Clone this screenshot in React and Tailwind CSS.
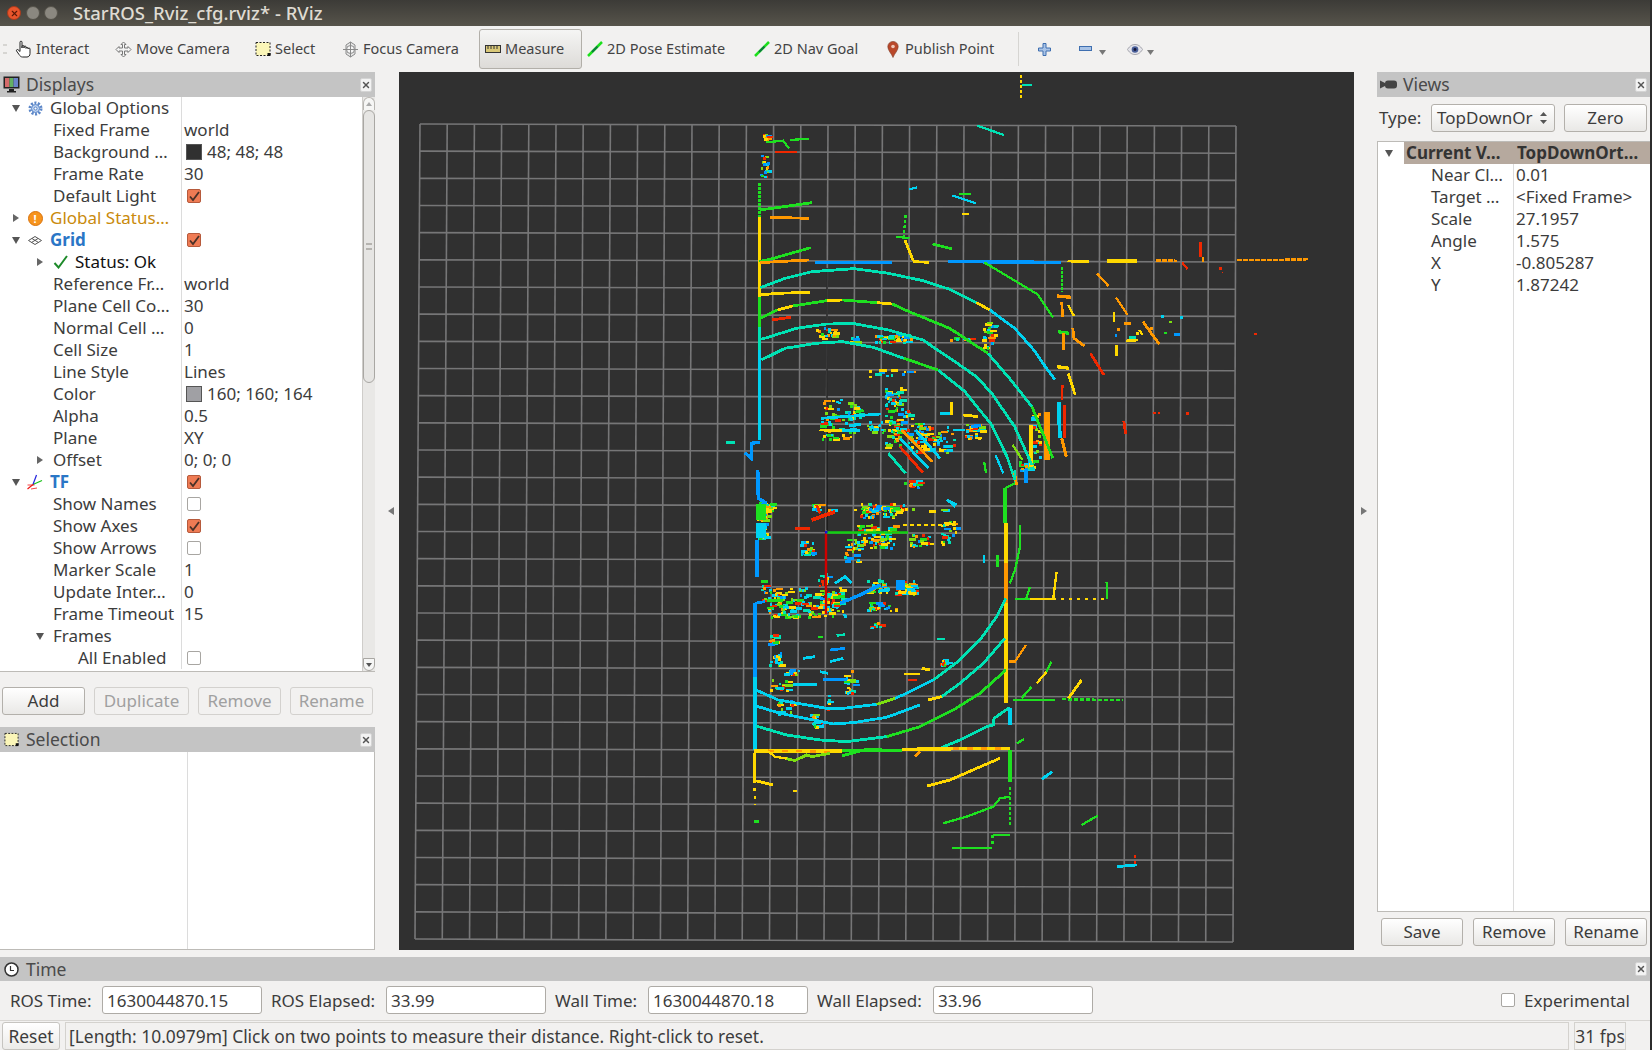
import { X } from "lucide-react";

const B = "#0098ff", C = "#00d2f0", T = "#00e2b4", G = "#1ee020", L = "#7ce010", Y = "#ffd800", O = "#ff9800", R = "#f02800";
const RAINBOW = [B, C, T, G, L, Y, O, R, Y, C];

// scan segments, in the coordinates of the upper crop (x * 0.3827 + 720, y / 3 + 110)
const upperLines = [
  [G, 2, "103,220 103,320", "3 1"], [Y, 2.5, "103,320 103,560"], [G, 2.5, "103,560 103,650"], [T, 2.5, "103,650 103,720"], [C, 3, "103,720 103,990"],
  [B, 2.5, "105,997 82,1000 82,1045 65,1028"], [T, 2, "15,997 38,997"],
  [G, 1.5, "120,97 165,92 180,115"], [G, 1.5, "183,90 232,86"], [R, 1.5, "145,127 200,125"],
  [G, 2, "105,300 240,278"], [O, 2, "130,322 232,325"], [G, 2, "103,455 140,445 237,413"], [O, 2, "105,458 150,455 232,450"],
  [Y, 2, "105,555 150,550 235,547"], [R, 2, "135,630 185,622"], [T, 1.5, "672,47 742,75"],
  [B, 2.5, "247,458 450,458"], [B, 2.5, "595,455 890,457"], [G, 1.5, "690,457 760,505 830,553 870,622"],
  [Y, 2, "908,453 965,455"], [Y, 3, "1010,453 1090,453"], [O, 2, "1140,451 1195,453", "5 1"], [O, 1.5, "1350,451 1540,448", "5 1"],
  [R, 2, "1255,395 1255,440"], [O, 2, "1262,440 1262,455"], [R, 1.5, "1208,458 1222,478"], [R, 2, "1308,470 1310,490", "3 3"],
  [O, 1.5, "985,490 1015,528"], [O, 1.5, "1035,563 1065,615"], [Y, 1.5, "1030,605 1030,635"], [O, 2, "1105,635 1148,703"], [Y, 1.5, "1095,660 1105,675"],
  [Y, 2, "1060,693 1092,690"], [Y, 2, "1037,705 1037,738"], [R, 2, "968,730 1003,795"],
  [G, 1.5, "893,470 893,545", "3 1"], [O, 2.5, "880,558 918,562"], [O, 2, "893,575 895,620"], [Y, 1.5, "910,585 925,618"], [G, 2.5, "883,665 912,670"],
  [O, 2, "898,670 898,720"], [O, 2, "922,655 925,685 952,708"], [Y, 2.5, "880,770 912,775"], [Y, 2, "910,790 928,855"], [R, 1.5, "895,825 893,870"],
  [C, 3, "885,875 888,985"], [R, 2, "900,885 900,985"], [O, 2.5, "893,985 905,1040"], [O, 5, "855,905 855,1050"], [Y, 3, "812,945 812,1070"],
  [T, 2, "105,533 170,505 240,485 350,476"], [T, 2, "350,476 440,490 530,512 600,538 670,578"], [Y, 2, "670,578 705,600"], [C, 2, "705,600 770,655 820,720 850,770 875,808"],
  [G, 2, "105,625 150,600"], [Y, 2, "150,600 190,588"], [G, 2, "190,588 280,572"], [Y, 2, "280,572 320,570"], [G, 2, "320,570 410,578"], [Y, 2, "410,578 450,582"],
  [G, 2, "450,582 490,603 600,655 700,730"], [T, 2, "700,730 760,810 815,890"], [G, 2, "815,890 870,1045"],
  [T, 2, "108,688 200,655 280,642 350,641 440,660 530,690 620,760 670,800 710,850 770,950 815,1065"],
  [T, 2, "108,750 170,715 250,700 320,695 400,712 480,745"], [G, 2, "480,745 570,780"], [T, 2, "570,780 640,845 710,945 750,1040 775,1125"],
  [C, 1.5, "607,256 668,280"], [G, 1.5, "625,253 655,251"], [Y, 2, "632,312 650,312"], [C, 1.5, "495,238 515,232"],
  [G, 1.5, "485,315 480,380", "3 2"], [G, 1.5, "460,380 495,385"], [Y, 2, "483,390 505,452"], [Y, 2, "505,455 545,457"], [G, 2, "555,402 607,417"],
  [C, 2, "265,925 420,912"], [Y, 2, "260,960 320,962"], [C, 2, "320,962 365,962"], [O, 2, "475,960 555,1055"], [C, 2, "470,985 545,1075"], [T, 2, "440,1030 485,1090"],
  [R, 2, "470,1010 530,1088"], [C, 2, "510,960 575,1045"], [C, 2, "575,910 610,910"], [Y, 2, "605,875 605,915"], [Y, 2, "635,915 675,920"], [C, 2, "610,960 640,960"],
  [C, 1.5, "720,1035 740,1090"], [G, 1.5, "690,1055 695,1090"], [G, 2.5, "745,1135 745,1195"], [O, 2, "770,1090 775,1125"], [B, 2.5, "800,1075 800,1120"], [L, 1.5, "765,1005 790,1050"],
  [B, 2.5, "98,1080 100,1165 120,1180"], [C, 2, "595,1170 615,1190"], [Y, 1.5, "787,-105 787,-30", "3 2"], [T, 1.5, "790,-75 815,-75"],
  [R, 1.5, "1132,908 1150,910", "3 2"], [R, 1.5, "1218,911 1232,911", "3 2"], [R, 2, "1055,932 1060,972"], [R, 1.5, "1395,673 1408,673", "3 2"],
];

// scan segments, in the coordinates of the lower crop (x / 3 + 720, y / 3 + 470)
const lowerLines = [
  [B, 2.5, "115,5 115,85 140,100"], [G, 9, "122,102 122,150"], [C, 9, "122,160 122,205"], [B, 3, "112,210 112,320"], [B, 3, "105,400 105,620"], [C, 2.5, "105,620 105,840"], [B, 2, "105,400 135,395"],
  [G, 2.5, "140,392 190,392"], [B, 2.5, "360,400 420,375 480,345"], [C, 2, "345,340 375,320 395,340"], [R, 3, "275,150 345,125"], [R, 2, "290,105 300,130"],
  [B, 10, "528,345 556,345"], [R, 2, "225,175 270,175"], [C, 2, "680,90 710,105"], [C, 2, "250,565 285,560"], [B, 2, "330,540 375,535"], [C, 2, "330,575 370,565"], [G, 1.5, "295,500 310,500"],
  [T, 1.5, "350,497 375,493"], [C, 2, "220,643 290,643"], [C, 2, "300,605 325,610"], [B, 2, "310,628 380,628"], [Y, 2, "552,612 600,612"], [Y, 2, "605,595 630,600"],
  [R, 2, "565,630 590,630"], [T, 2, "652,507 675,507"], [Y, 2, "550,165 710,165", "4 3"],
  [G, 2.5, "855,60 855,160"], [G, 1.5, "855,55 885,40"], [T, 2, "885,0 885,30"], [B, 3, "918,0 918,40"], [Y, 2.5, "858,160 858,280"], [O, 3, "858,280 858,400"], [Y, 2.5, "858,400 858,700"],
  [G, 1.5, "900,165 900,230 885,300 870,340"], [G, 1.5, "833,255 833,290"], [C, 1.5, "792,255 792,280"],
  [G, 1.5, "885,388 930,388"], [Y, 1.5, "930,388 1000,388"], [Y, 1.5, "1000,385 1010,305"], [G, 1.5, "918,388 930,350"], [Y, 1.5, "1000,388 1160,388", "3 5"], [G, 1.5, "1160,335 1162,388"],
  [C, 2, "108,660 175,690 220,698 320,715 370,715 470,703"], [L, 2, "470,703 525,685"], [C, 2, "525,685 560,670 640,630"], [T, 2, "640,630 720,570 780,510 830,440 858,385"],
  [C, 2, "108,708 180,730 270,748 340,762 400,758 500,742 600,705"], [Y, 2, "625,690 665,680"], [T, 2, "665,680 720,640 790,580 855,505"],
  [T, 2, "108,768 200,795 300,810 380,815 500,800"], [G, 2, "500,800 600,770 700,720 780,670 858,600"],
  [G, 2, "365,858 440,838 545,842"], [T, 2, "660,835 720,810 800,770 820,765 822,745 870,712"], [Y, 3, "103,842 365,842"], [O, 1.5, "145,842 330,846", "6 8"], [G, 2.5, "365,842 545,842"], [Y, 2.5, "545,838 870,835"], [O, 1.5, "700,836 860,836", "6 8"],
  [Y, 2, "103,850 103,930"], [Y, 2, "105,932 160,945"], [Y, 1.5, "103,930 105,1005", "3 5"],
  [Y, 1.5, "145,845 165,860 200,866"], [L, 2, "200,866 225,872 260,855 275,860 330,850"], [O, 1.5, "585,860 600,845"],
  [Y, 2, "622,948 690,930 770,895 840,865"], [C, 2.5, "870,715 870,765"], [G, 2.5, "870,840 870,935"], [G, 1.5, "870,950 870,1065", "3 2"], [G, 1.5, "670,1060 740,1040 820,1010 840,985 870,980"],
  [G, 2, "880,690 1005,690"], [G, 1.5, "1025,688 1210,690", "4 2"], [G, 1.5, "905,685 935,650"], [Y, 1.5, "950,640 980,605"], [G, 1.5, "980,605 995,575"], [Y, 2, "1045,685 1085,630"],
  [O, 1.5, "868,575 885,575 918,525"], [C, 2, "965,928 997,905"], [G, 1.5, "1085,1065 1133,1037"], [G, 1.5, "890,820 912,808"], [G, 1.5, "695,1133 730,1135 815,1135"], [G, 1.5, "818,1095 870,1095"], [G, 1.5, "818,1095 818,1130", "3 3"],
  [G, 2, "102,1055 118,1055"], [Y, 1.5, "218,963 230,963"], [C, 2, "1190,1190 1250,1185"], [R, 1.5, "1245,1155 1245,1185", "3 3"],
];

// noisy blobs as x0, y0, x1, y1, point count
const upperBlobs = [
  [108, 70, 128, 85, 8], [105, 130, 125, 200, 14], [250, 652, 300, 685, 12], [340, 670, 360, 695, 7], [390, 672, 500, 695, 28], [600, 680, 660, 690, 5],
  [685, 628, 715, 715, 18], [430, 830, 475, 900, 26], [260, 865, 370, 985, 42], [370, 920, 470, 965, 20], [430, 900, 540, 1010, 46], [510, 945, 610, 1025, 34],
  [640, 940, 680, 985, 22], [780, 1050, 820, 1078, 14], [480, 1108, 518, 1130, 14], [100, 1175, 135, 1200, 18], [240, 1180, 260, 1200, 6], [365, 1178, 480, 1200, 22],
  [385, 775, 510, 800, 10], [810, 895, 835, 1040, 14], [1000, 600, 1220, 680, 7], [240, 1195, 610, 1200, 8],
];
const lowerBlobs = [
  [110, 100, 140, 150, 40], [110, 160, 135, 205, 24], [120, 320, 135, 400, 8], [140, 350, 380, 440, 110], [440, 395, 530, 420, 20], [440, 325, 500, 365, 22],
  [525, 330, 590, 370, 40], [420, 110, 530, 140, 30], [410, 160, 520, 232, 46], [565, 190, 625, 225, 14], [660, 150, 712, 222, 16], [240, 205, 278, 252, 14],
  [370, 205, 415, 272, 16], [290, 305, 320, 345, 8], [145, 490, 168, 522, 10], [148, 545, 182, 590, 12], [188, 598, 242, 612, 8], [148, 628, 200, 660, 12],
  [370, 600, 402, 668, 14], [660, 565, 685, 588, 8], [170, 690, 215, 735, 8], [270, 725, 310, 770, 12], [320, 670, 330, 720, 4], [450, 450, 480, 470, 6],
];

// small seeded generator, so the noise is the same on every render
function makeDots(blobs, dotW, dotH) {
  let seed = 1234;
  const next = () => {
    seed = (seed * 16807) % 2147483647;
    return seed / 2147483647;
  };
  const dots = [];
  blobs.forEach(([x0, y0, x1, y1, n]) => {
    const count = Math.round(n * 1.6);
    for (let i = 0; i < count; i++) {
      const long = next() > 0.7 ? 2.5 : 1;
      dots.push({
        x: x0 + next() * (x1 - x0),
        y: y0 + next() * (y1 - y0),
        w: dotW * long,
        h: dotH,
        fill: RAINBOW[Math.floor(next() * RAINBOW.length)],
      });
    }
  });
  return dots;
}
const upperDots = makeDots(upperBlobs, 7, 8);
const lowerDots = makeDots(lowerBlobs, 8, 8);

// ground grid, 30 cells between four slightly skewed corners
const corner = { tl: [420, 124], tr: [1236, 126], bl: [415, 939], br: [1233, 942] };
const gridLines = [];
for (let i = 0; i <= 30; i++) {
  const t = i / 30;
  const mix = (a, b) => [a[0] + (b[0] - a[0]) * t, a[1] + (b[1] - a[1]) * t];
  gridLines.push([mix(corner.tl, corner.tr), mix(corner.bl, corner.br)]);
  gridLines.push([mix(corner.tl, corner.bl), mix(corner.tr, corner.br)]);
}

function ScanLayer({ transform, lines, dots }) {
  return (
    <g transform={transform} shapeRendering="crispEdges">
      {dots.map((d, i) => (
        <rect key={i} x={d.x} y={d.y} width={d.w} height={d.h} fill={d.fill} />
      ))}
      {lines.map(([stroke, width, points, dash], i) => (
        <polyline key={i} points={points} fill="none" stroke={stroke} strokeWidth={width + 0.8} strokeDasharray={dash} vectorEffect="non-scaling-stroke" />
      ))}
    </g>
  );
}

function MapView() {
  return (
    <svg className="block w-full h-full" viewBox="0 0 955 878">
      <g transform="translate(-399 -72)">
        {gridLines.map(([a, b], i) => (
          <line key={i} x1={a[0]} y1={a[1]} x2={b[0]} y2={b[1]} stroke="#767677" strokeWidth="1.6" />
        ))}
        <line x1="827" y1="268" x2="827" y2="530" stroke="#111" strokeWidth="1.2" />
        <ScanLayer transform="translate(720 110) scale(0.3827 0.3333)" lines={upperLines} dots={upperDots} />
        <ScanLayer transform="translate(720 470) scale(0.3333 0.3333)" lines={lowerLines} dots={lowerDots} />
        <line x1="826" y1="532.5" x2="826" y2="614" stroke="#d00000" strokeWidth="2.4" />
        <line x1="826" y1="532.5" x2="908" y2="532.5" stroke="#12d012" strokeWidth="2.4" />
        <rect x="825" y="531" width="2.5" height="2.5" fill="#1010e0" />
      </g>
    </svg>
  );
}

/* ---------- icons ---------- */
function HandIcon() {
  return (
    <svg width="17" height="18" viewBox="0 0 17 18" fill="#fff" stroke="#222" strokeWidth="1">
      <path d="M5 9V2.2a1 1 0 0 1 2 0V8l0-1.5a1 1 0 0 1 2 0V8l0-1a1 1 0 0 1 2 0v1.4a1 1 0 0 1 2 0V9a1 1 0 0 1 2 0v4.5c0 2-1.200 3.500-3 3.500H7.500C6 17 5 16 4 14.500L1.600 11c-.7-1 .7-2 1.500-1.200L5 11.500Z" />
    </svg>
  );
}
function MoveIcon() {
  return (
    <svg width="17" height="17" viewBox="0 0 17 17" fill="#f4f4f4" stroke="#777" strokeWidth="1">
      <path d="M8.500 1 11 3.500H9.500V7H13V5.500L16 8.500 13 11.500V10H9.500V13.500H11L8.500 16 6 13.500H7.500V10H4V11.500L1 8.500 4 5.500V7H7.500V3.500H6Z" />
    </svg>
  );
}
function SelectIcon({ size = 16 }) {
  return (
    <svg width={size} height={size} viewBox="0 0 16 16">
      <rect x="1" y="1.500" width="14" height="13" fill="#fbf6b8" stroke="#222" strokeDasharray="2 1.500" />
      <rect x="12.500" y="12" width="3" height="3" fill="#111" />
    </svg>
  );
}
function FocusIcon() {
  return (
    <svg width="17" height="17" viewBox="0 0 17 17" fill="none" stroke="#8a8a8a">
      <path d="M8.500 1 13 4v9l-4.500 3L4 13V4Z" fill="#e8e8e8" />
      <circle cx="8.500" cy="8.500" r="4" fill="#f6f6f6" />
      <path d="M8.500 1v15M1 8.500h15" />
    </svg>
  );
}
function RulerIcon() {
  return (
    <svg width="16" height="9" viewBox="0 0 16 9">
      <rect x=".5" y=".5" width="15" height="7" fill="#d9c878" stroke="#333" />
      <path d="M3 1v3M6 1v3M9 1v3M12 1v3" stroke="#333" />
    </svg>
  );
}
function ArrowIcon() {
  return (
    <svg width="16" height="16" viewBox="0 0 16 16">
      <path d="M1 15 15 1" stroke="#1de01d" strokeWidth="2.500" />
      <path d="M5 11 10.500 5.500" stroke="#0c7c3c" strokeWidth="2" />
    </svg>
  );
}
function PinIcon() {
  return (
    <svg width="12" height="17" viewBox="0 0 12 17">
      <path d="M6 16.500C4.500 12.500 .8 9.500.8 5.600a5.200 5.200 0 0 1 10.400 0C11.200 9.500 7.500 12.500 6 16.500Z" fill="#b9482a" stroke="#7e3a25" strokeWidth=".6" />
      <circle cx="6" cy="5.500" r="1.800" fill="#f0c8b8" />
    </svg>
  );
}
function PlusIcon() {
  return (
    <svg width="13" height="13" viewBox="0 0 13 13">
      <path d="M5 .5h3v4.500h4.500v3H8v4.500H5V8H.5V5H5Z" fill="#a9c3e6" stroke="#3f6fb0" />
    </svg>
  );
}
function MinusIcon() {
  return (
    <svg width="13" height="6" viewBox="0 0 13 6">
      <rect x=".5" y=".5" width="12" height="4" fill="#a9c3e6" stroke="#3f6fb0" />
    </svg>
  );
}
function EyeIcon() {
  return (
    <svg width="16" height="11" viewBox="0 0 16 11">
      <path d="M.5 5.500C3 1.500 5.500.5 8 .5s5 1 7.500 5c-2.500 4-5 5-7.500 5s-5-1-7.500-5Z" fill="#e4e4ea" stroke="#a5a5ad" />
      <circle cx="8" cy="5.500" r="3.300" fill="#4a5f99" />
      <circle cx="8" cy="5.500" r="1.400" fill="#14183a" />
    </svg>
  );
}
function MonitorIcon() {
  return (
    <svg width="17" height="17" viewBox="0 0 17 17">
      <rect x=".5" y=".5" width="16" height="12" fill="#222" />
      <rect x="2" y="2" width="4.500" height="9" fill="#d46a6a" />
      <rect x="6.500" y="2" width="4" height="9" fill="#63b063" />
      <rect x="10.500" y="2" width="4.500" height="9" fill="#6a83c8" />
      <path d="M6 13h5v2h2v1.500H4V15h2Z" fill="#222" />
    </svg>
  );
}
function CameraIcon() {
  return (
    <svg width="17" height="11" viewBox="0 0 17 11" fill="#444">
      <path d="M0 1.500 5 4v3L0 9.500Z" />
      <rect x="5" y="1.500" width="12" height="8" rx="3" />
    </svg>
  );
}
function ClockIcon() {
  return (
    <svg width="15" height="15" viewBox="0 0 15 15" fill="#fff" stroke="#333" strokeWidth="1.500">
      <circle cx="7.500" cy="7.500" r="6.500" />
      <path d="M6.500 4v4.500H10" fill="none" strokeWidth="1.200" />
    </svg>
  );
}
function GearIcon() {
  return (
    <svg width="15" height="15" viewBox="0 0 15 15" fill="none" stroke="#5b86c8">
      <circle cx="7.500" cy="7.500" r="5.500" strokeWidth="3" strokeDasharray="2 1.450" />
      <circle cx="7.500" cy="7.500" r="4" fill="#bcd2f0" strokeWidth="1" />
      <circle cx="7.500" cy="7.500" r="1.500" fill="#fff" strokeWidth="1" />
    </svg>
  );
}
function AlertIcon() {
  return (
    <span className="flex items-center justify-center w-[15px] h-[15px] rounded-full bg-[#f7941d] border border-[#d9730d] text-white text-[11px] font-bold leading-none">!</span>
  );
}
function GridIcon() {
  return (
    <svg width="14" height="9" viewBox="0 0 14 9" fill="none" stroke="#555">
      <path d="M7 .5 13.500 4.500 7 8.500.5 4.500ZM4 2.500l6.500 4M10 2.500l-6.500 4" />
    </svg>
  );
}
function AxesIcon() {
  return (
    <svg width="16" height="16" viewBox="0 0 16 16" fill="none" strokeWidth="1.200">
      <path d="M6 10.500 15 6.500" stroke="#15c015" />
      <path d="M6 10.500 9.500 1" stroke="#2222dd" />
      <path d="M6 10.500.5 15" stroke="#ee1515" />
      <path d="M.5 11h7M4 15l6-1" stroke="#ee1515" strokeWidth=".8" />
    </svg>
  );
}
function CheckMark() {
  return (
    <svg width="16" height="14" viewBox="0 0 16 14" fill="none" stroke="#1d8a2a" strokeWidth="2">
      <path d="M1.500 8 5.500 12.500 14 1" />
    </svg>
  );
}
function Arrow({ open }) {
  return open ? (
    <svg width="8" height="7" viewBox="0 0 8 7"><path d="M0 0h8L4 7Z" fill="#555" /></svg>
  ) : (
    <svg width="6" height="8" viewBox="0 0 6 8"><path d="M0 0l6 4-6 4Z" fill="#666" /></svg>
  );
}
function SmallDrop() {
  return (
    <svg width="7" height="5" viewBox="0 0 7 5"><path d="M0 0h7L3.500 5Z" fill="#777" /></svg>
  );
}
function DockClose() {
  return (
    <span className="ml-auto mr-[3px] flex items-center justify-center w-[12px] h-[14px] rounded-[2px] bg-[#f3f3f3] border border-[#d4d4d4]">
      <X size={10} strokeWidth={3.5} color="#555" />
    </span>
  );
}
function CheckBox({ on }) {
  if (on) {
    return (
      <span className="flex items-center justify-center w-[14px] h-[14px] rounded-[2px] bg-[#ef7b54] border border-[#b65a3c]">
        <svg width="12" height="11" viewBox="0 0 12 11" fill="none" stroke="#4a3128" strokeWidth="1.800"><path d="M2 5.500 5 9 11 1" /></svg>
      </span>
    );
  }
  return <span className="block w-[14px] h-[14px] rounded-[2px] bg-white border border-[#a8a6a2]" />;
}
function Swatch({ color }) {
  return <span className="w-[16px] h-[16px] mr-[5px] ml-[2px] border border-[#555]" style={{ background: color }} />;
}

/* ---------- data ---------- */
const tools = [
  { label: "Interact", icon: <HandIcon />, w: "w-[100px]" },
  { label: "Move Camera", icon: <MoveIcon />, w: "w-[139px]" },
  { label: "Select", icon: <SelectIcon />, w: "w-[88px]" },
  { label: "Focus Camera", icon: <FocusIcon />, w: "w-[137px]" },
];
const tools2 = [
  { label: "2D Pose Estimate", icon: <ArrowIcon />, w: "w-[167px]" },
  { label: "2D Nav Goal", icon: <ArrowIcon />, w: "w-[131px]" },
  { label: "Publish Point", icon: <PinIcon />, w: "w-[134px]" },
];

const prop = "pl-[53px]";
const rows = [
  { name: "Global Options", top: "open", icon: <GearIcon /> },
  { name: "Fixed Frame", value: "world" },
  { name: "Background …", value: "48; 48; 48", swatch: "#303030" },
  { name: "Frame Rate", value: "30" },
  { name: "Default Light", check: true },
  { name: "Global Status…", top: "closed", icon: <AlertIcon />, tone: "text-[#c98a0c]" },
  { name: "Grid", top: "open", icon: <GridIcon />, tone: "text-[#2a76c6] font-bold", check: true },
  { name: "Status: Ok", status: true },
  { name: "Reference Fr…", value: "world" },
  { name: "Plane Cell Co…", value: "30" },
  { name: "Normal Cell …", value: "0" },
  { name: "Cell Size", value: "1" },
  { name: "Line Style", value: "Lines" },
  { name: "Color", value: "160; 160; 164", swatch: "#a0a0a4" },
  { name: "Alpha", value: "0.5" },
  { name: "Plane", value: "XY" },
  { name: "Offset", value: "0; 0; 0", sub: "closed" },
  { name: "TF", top: "open", icon: <AxesIcon />, tone: "text-[#2a76c6] font-bold", check: true },
  { name: "Show Names", check: false },
  { name: "Show Axes", check: true },
  { name: "Show Arrows", check: false },
  { name: "Marker Scale", value: "1" },
  { name: "Update Inter…", value: "0" },
  { name: "Frame Timeout", value: "15" },
  { name: "Frames", sub: "open" },
  { name: "All Enabled", check: false, deep: true },
];
const viewRows = [
  ["Near Cl…", "0.01"],
  ["Target …", "<Fixed Frame>"],
  ["Scale", "27.1957"],
  ["Angle", "1.575"],
  ["X", "-0.805287"],
  ["Y", "1.87242"],
];

/* ---------- pieces ---------- */
function Tool({ item }) {
  return (
    <div className={`flex items-center ${item.w}`}>
      <span className="flex justify-center w-[17px] mr-[4px]">{item.icon}</span>
      <span className="whitespace-nowrap">{item.label}</span>
    </div>
  );
}

function DockTitle({ icon, title, className = "" }) {
  return (
    <div className={`flex items-center h-[25px] shrink-0 bg-[#c4c4c4] text-[#4a4a4a] text-[17.500px] pl-[3px] ${className}`}>
      <span className="flex justify-center w-[17px] mr-[6px]">{icon}</span>
      <span>{title}</span>
      <DockClose />
    </div>
  );
}

function QtButton({ children, disabled, className = "" }) {
  return (
    <div
      className={`flex items-center justify-center rounded-[3px] border h-[28px] ${
        disabled ? "border-[#d3d1ce] text-[#a0a0a0] bg-[#f2f1f0]" : "border-[#b3b0ab] text-[#3c3c3c] bg-gradient-to-b from-white to-[#e9e8e6]"
      } ${className}`}
    >
      {children}
    </div>
  );
}

function TreeRow({ row }) {
  let left;
  if (row.top) {
    left = (
      <div className={`flex items-center pl-[10px] ${row.tone || ""}`}>
        <span className="flex justify-center w-[12px]"><Arrow open={row.top === "open"} /></span>
        <span className="flex justify-center w-[16px] ml-[5px] mr-[7px]">{row.icon}</span>
        <span className="whitespace-nowrap">{row.name}</span>
      </div>
    );
  } else if (row.status) {
    left = (
      <div className="flex items-center pl-[35px] text-[#111]">
        <span className="flex justify-center w-[10px] mr-[8px]"><Arrow /></span>
        <CheckMark />
        <span className="ml-[6px] whitespace-nowrap">{row.name}</span>
      </div>
    );
  } else if (row.sub) {
    left = (
      <div className="flex items-center pl-[35px]">
        <span className="flex justify-center w-[10px] mr-[8px]"><Arrow open={row.sub === "open"} /></span>
        <span className="whitespace-nowrap">{row.name}</span>
      </div>
    );
  } else {
    left = <div className={`whitespace-nowrap ${row.deep ? "pl-[78px]" : prop}`}>{row.name}</div>;
  }
  return (
    <div className="flex items-center h-[22px]">
      <div className="w-[182px] h-full flex items-center overflow-hidden border-r border-[#dcdcdc]">{left}</div>
      <div className="flex items-center pl-[2px]">
        {row.swatch && <Swatch color={row.swatch} />}
        {row.value}
        {row.check !== undefined && <span className="ml-[3px]"><CheckBox on={row.check} /></span>}
      </div>
    </div>
  );
}

function ScrollBar() {
  return (
    <div className="flex flex-col w-[13px] h-full border-l border-[#cfcdca] bg-[#e9e8e6]">
      <div className="flex items-center justify-center h-[13px] rounded-t-[6px] border border-b-0 border-[#b8b6b2] bg-[#f6f6f5]">
        <svg width="6" height="4" viewBox="0 0 6 4"><path d="M3 0l3 4H0Z" fill="#aaa" /></svg>
      </div>
      <div className="flex items-center justify-center h-[273px] rounded-[6px] border border-[#a9a7a3] bg-[#e6e5e3]">
        <span className="w-[6px] h-[7px] border-y-2 border-[#b5b3af]" />
      </div>
      <div className="flex-1" />
      <div className="flex items-center justify-center h-[13px] rounded-b-[6px] border border-[#a9a7a3] bg-[#f6f6f5]">
        <svg width="6" height="4" viewBox="0 0 6 4"><path d="M0 0h6L3 4Z" fill="#555" /></svg>
      </div>
    </div>
  );
}

function DisplaysDock() {
  return (
    <div className="flex flex-col w-[375px] h-[878px]">
      <DockTitle icon={<MonitorIcon />} title="Displays" />
      <div className="flex h-[575px] bg-white border-b border-[#bdbbb7]">
        <div className="flex-1">
          {rows.map((row) => (
            <TreeRow key={row.name} row={row} />
          ))}
        </div>
        <ScrollBar />
      </div>
      <div className="flex items-center gap-[9px] pl-[2px] h-[55px] pt-[2px]">
        <QtButton className="w-[83px]">Add</QtButton>
        <QtButton disabled className="w-[95px]">Duplicate</QtButton>
        <QtButton disabled className="w-[83px]">Remove</QtButton>
        <QtButton disabled className="w-[83px]">Rename</QtButton>
      </div>
      <DockTitle icon={<SelectIcon size={15} />} title="Selection" />
      <div className="flex flex-1 bg-white border-b border-r border-[#bdbbb7]">
        <div className="w-[188px] border-r border-[#dcdcdc]" />
      </div>
    </div>
  );
}

function ViewsDock() {
  return (
    <div className="flex flex-col flex-1 h-[878px]">
      <DockTitle icon={<CameraIcon />} title="Views" />
      <div className="flex items-center h-[44px] pl-[2px] pb-[3px]">
        <span className="w-[52px]">Type:</span>
        <div className="flex items-center justify-between w-[124px] h-[28px] pl-[5px] pr-[7px] rounded-[3px] border border-[#b3b0ab] bg-gradient-to-b from-white to-[#e9e8e6]">
          <span>TopDownOr</span>
          <svg width="7" height="12" viewBox="0 0 7 12" fill="#555"><path d="M3.500 0 7 4H0ZM0 8h7l-3.500 4Z" /></svg>
        </div>
        <QtButton className="w-[83px] ml-[9px]">Zero</QtButton>
      </div>
      <div className="flex flex-col h-[771px] bg-white border border-r-0 border-[#bdbbb7]">
        <div className="flex h-[22px] items-center font-bold text-[#333]">
          <span className="flex justify-center w-[26px] pr-[4px]"><Arrow open /></span>
          <div className="flex flex-1 items-center h-full bg-[#b6a99e]">
            <span className="w-[110px] pl-[2px] whitespace-nowrap">Current V…</span>
            <span className="pl-[3px] whitespace-nowrap">TopDownOrt…</span>
          </div>
        </div>
        <div className="flex flex-1">
          <div className="w-[136px] border-r border-[#dcdcdc]">
            {viewRows.map(([name]) => (
              <div key={name} className="h-[22px] flex items-center pl-[53px] whitespace-nowrap">{name}</div>
            ))}
          </div>
          <div>
            {viewRows.map(([name, value]) => (
              <div key={name} className="h-[22px] flex items-center pl-[2px] whitespace-nowrap">{value}</div>
            ))}
          </div>
        </div>
      </div>
      <div className="flex items-center gap-[10px] pl-[4px] flex-1 pt-[1px]">
        <QtButton className="w-[82px]">Save</QtButton>
        <QtButton className="w-[82px]">Remove</QtButton>
        <QtButton className="w-[82px]">Rename</QtButton>
      </div>
    </div>
  );
}

function TimeField({ label, value, w }) {
  return (
    <>
      <span className={`${w} whitespace-nowrap`}>{label}</span>
      <div className="flex items-center w-[160px] h-[28px] mr-[9px] pl-[4px] bg-white rounded-[3px] border border-[#aeaba6]">{value}</div>
    </>
  );
}

export default function App() {
  return (
    <div className="flex flex-col w-[1652px] h-[1050px] overflow-hidden bg-[#f2f1f0] text-[#3c3c3c] text-[17px] border-r-2 border-[#2c2c2c] font-['Noto_Sans','Open_Sans',sans-serif]">
      {/* window title */}
      <div className="flex items-center h-[26px] shrink-0 bg-gradient-to-b from-[#3c3b37] to-[#57544b] pl-[7px]">
        <span className="flex items-center justify-center w-[14px] h-[14px] rounded-full bg-[#e9552c] border border-[#a83a1c]">
          <X size={9} strokeWidth={3} color="#5a1a08" />
        </span>
        <span className="w-[14px] h-[14px] ml-[5px] rounded-full bg-[#8b8880] border border-[#55524a]" />
        <span className="w-[14px] h-[14px] ml-[4px] rounded-full bg-[#8b8880] border border-[#55524a]" />
        <span className="ml-[15px] text-[#dfdbd2] text-[18.500px] font-medium">StarROS_Rviz_cfg.rviz* - RViz</span>
      </div>

      {/* tool bar */}
      <div className="flex items-center h-[46px] shrink-0 text-[14.500px] text-[#444]">
        <span className="w-[4px] h-[10px] ml-[3px] mr-[8px] border-y-2 border-[#d6d5d2]" />
        {tools.map((item) => (
          <Tool key={item.label} item={item} />
        ))}
        <div className="flex items-center w-[103px] h-[40px] mr-[4px] pl-[5px] rounded-[3px] border border-[#b2afa9] bg-gradient-to-b from-[#f5f5f4] to-[#dddbd8]">
          <span className="mr-[4px]"><RulerIcon /></span>
          Measure
        </div>
        {tools2.map((item) => (
          <Tool key={item.label} item={item} />
        ))}
        <span className="w-px h-[34px] bg-[#d6d5d2] mr-[19px]" />
        <PlusIcon />
        <span className="ml-[28px]"><MinusIcon /></span>
        <span className="ml-[7px] mt-[6px]"><SmallDrop /></span>
        <span className="ml-[21px]"><EyeIcon /></span>
        <span className="ml-[4px] mt-[6px]"><SmallDrop /></span>
      </div>

      {/* docks and 3D view */}
      <div className="flex h-[878px] shrink-0">
        <DisplaysDock />
        <div className="flex items-center justify-center w-[24px] pl-[8px]">
          <svg width="6" height="8" viewBox="0 0 6 8"><path d="M6 0v8L0 4Z" fill="#777" /></svg>
        </div>
        <div className="w-[955px] h-[878px] bg-[#303030]">
          <MapView />
        </div>
        <div className="flex items-center justify-center w-[23px] pr-[4px]">
          <svg width="6" height="8" viewBox="0 0 6 8"><path d="M0 0v8l6-4Z" fill="#777" /></svg>
        </div>
        <ViewsDock />
      </div>

      {/* time panel */}
      <div className="mt-[7px]">
        <DockTitle icon={<ClockIcon />} title="Time" className="!h-[24px]" />
      </div>
      <div className="flex items-center h-[41px] pl-[10px] border-b border-[#d8d6d3]">
        <TimeField label="ROS Time:" value="1630044870.15" w="w-[92px]" />
        <TimeField label="ROS Elapsed:" value="33.99" w="w-[115px]" />
        <TimeField label="Wall Time:" value="1630044870.18" w="w-[93px]" />
        <TimeField label="Wall Elapsed:" value="33.96" w="w-[116px]" />
        <span className="ml-[399px] mr-[9px]"><CheckBox on={false} /></span>
        <span>Experimental</span>
      </div>

      {/* status bar */}
      <div className="flex flex-1 items-stretch pl-[2px] pt-[1px] text-[17.400px]">
        <div className="flex items-center justify-center w-[58px] rounded-[3px] border border-[#c6c4c0] bg-gradient-to-b from-white to-[#ecebe9]">Reset</div>
        <div className="flex items-center w-[1504px] ml-[5px] pl-[3px] border border-[#d4d2ce] whitespace-nowrap">[Length: 10.0979m] Click on two points to measure their distance. Right-click to reset.</div>
        <div className="flex items-center justify-center w-[52px] ml-[5px] border border-[#d4d2ce]">31 fps</div>
      </div>
    </div>
  );
}
